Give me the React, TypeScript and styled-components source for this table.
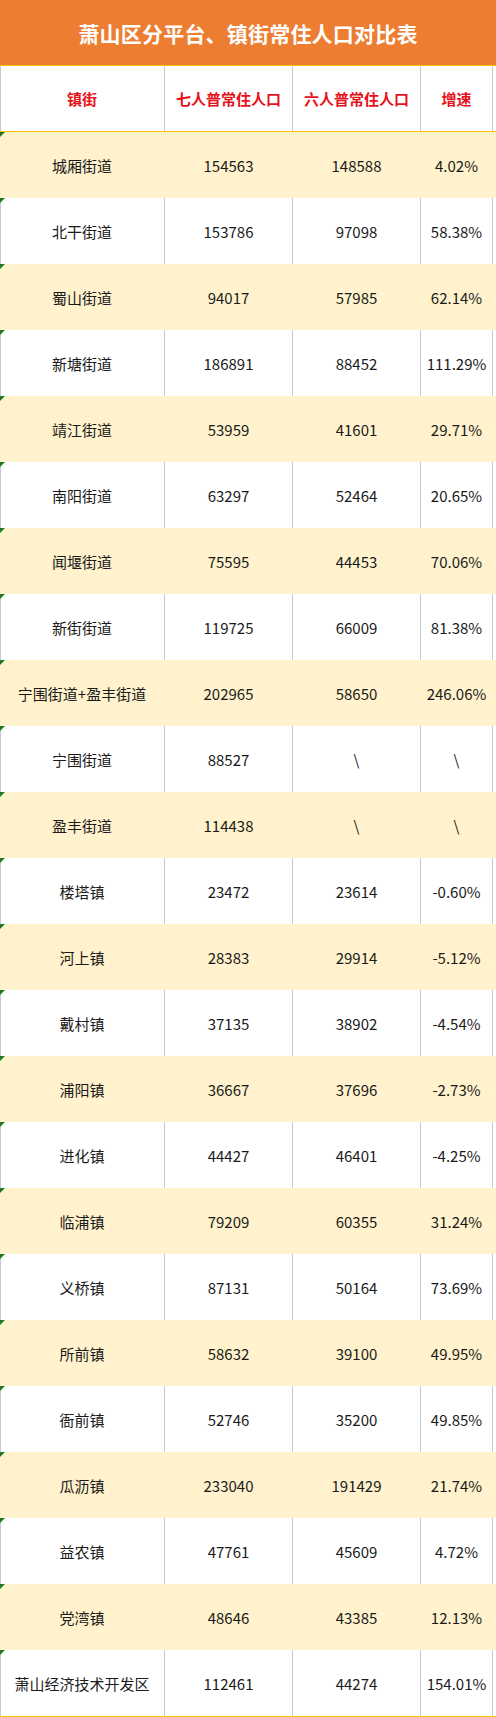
import React from "react";
import styled, { createGlobalStyle } from "styled-components";

const Global = createGlobalStyle`
  html, body { margin: 0; padding: 0; background: #ffffff; }
  body { font-family: "Noto Sans CJK SC", "Microsoft YaHei", "Noto Sans", sans-serif; }
`;

const Sheet = styled.div`
  width: 496px;
  display: flex;
  flex-direction: column;
  border-bottom: 2px solid #ffc000;
  box-sizing: border-box;
`;

const Title = styled.div`
  height: 65px;
  background: #ed7d31;
  color: #ffffff;
  font-size: 21px;
  font-weight: 700;
  display: flex;
  align-items: center;
  justify-content: center;
  border-bottom: 1px solid #ffc000;
  letter-spacing: 0.2px;
`;

const Row = styled.div<{ $shade?: boolean; $head?: boolean }>`
  position: relative;
  height: ${(p) => (p.$head ? "65px" : "66px")};
  display: grid;
  grid-template-columns: 165px 128px 128px 72px 3px;
  background: ${(p) => (p.$shade ? "#fff2cc" : "#ffffff")};
  border-bottom: ${(p) => (p.$head ? "1px solid #ffc000" : "none")};
  box-shadow: ${(p) => (p.$shade ? "none" : "inset 1px 0 0 #c9c9d3")};
`;

const Cell = styled.div<{ $shade?: boolean; $head?: boolean; $last?: boolean }>`
  display: flex;
  align-items: center;
  justify-content: center;
  font-size: 15px;
  font-weight: ${(p) => (p.$head ? 700 : 400)};
  color: ${(p) => (p.$head ? "#e8101a" : "#1a1a1a")};
  border-right: 1px solid
    ${(p) => (p.$shade ? "transparent" : "#c9c9d3")};
  white-space: nowrap;
`;

const Spacer = styled.div``;

const Marker = styled.span`
  position: absolute;
  left: 0;
  top: 0;
  width: 0;
  height: 0;
  border-top: 5px solid #1f7a1f;
  border-right: 5px solid transparent;
`;

const rows: [string, string, string, string][] = [
  ["城厢街道", "154563", "148588", "4.02%"],
  ["北干街道", "153786", "97098", "58.38%"],
  ["蜀山街道", "94017", "57985", "62.14%"],
  ["新塘街道", "186891", "88452", "111.29%"],
  ["靖江街道", "53959", "41601", "29.71%"],
  ["南阳街道", "63297", "52464", "20.65%"],
  ["闻堰街道", "75595", "44453", "70.06%"],
  ["新街街道", "119725", "66009", "81.38%"],
  ["宁围街道+盈丰街道", "202965", "58650", "246.06%"],
  ["宁围街道", "88527", "\\", "\\"],
  ["盈丰街道", "114438", "\\", "\\"],
  ["楼塔镇", "23472", "23614", "-0.60%"],
  ["河上镇", "28383", "29914", "-5.12%"],
  ["戴村镇", "37135", "38902", "-4.54%"],
  ["浦阳镇", "36667", "37696", "-2.73%"],
  ["进化镇", "44427", "46401", "-4.25%"],
  ["临浦镇", "79209", "60355", "31.24%"],
  ["义桥镇", "87131", "50164", "73.69%"],
  ["所前镇", "58632", "39100", "49.95%"],
  ["衙前镇", "52746", "35200", "49.85%"],
  ["瓜沥镇", "233040", "191429", "21.74%"],
  ["益农镇", "47761", "45609", "4.72%"],
  ["党湾镇", "48646", "43385", "12.13%"],
  ["萧山经济技术开发区", "112461", "44274", "154.01%"],
];

export default function App() {
  return (
    <>
      <Global />
      <Sheet>
        <Title>萧山区分平台、镇街常住人口对比表</Title>
        <Row $head>
          {["镇街", "七人普常住人口", "六人普常住人口", "增速"].map((h) => (
            <Cell key={h} $head>
              {h}
            </Cell>
          ))}
          <Spacer />
        </Row>
        {rows.map((r, i) => {
          const shade = i % 2 === 0;
          return (
            <Row key={r[0]} $shade={shade}>
              <Marker />
              {r.map((v, j) => (
                <Cell key={j} $shade={shade}>
                  {v}
                </Cell>
              ))}
              <Spacer />
            </Row>
          );
        })}
      </Sheet>
    </>
  );
}
